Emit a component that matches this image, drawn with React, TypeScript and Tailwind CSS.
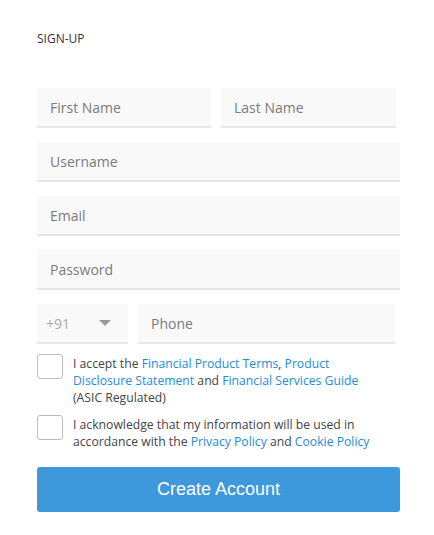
import React from "react";

const FIELD =
  "h-[40px] bg-[#f9f9f9] border-b-2 border-[#e6e6e6] px-[13px] flex items-center text-[14px] text-[#7b7b7b]";

function Field({ label, className = "" }: { label: string; className?: string }) {
  return (
    <div className={`${FIELD} ${className}`}>
      <span>{label}</span>
    </div>
  );
}

function Check({ children }: { children: React.ReactNode }) {
  return (
    <div className="flex items-start gap-[10px]">
      <div className="w-[26px] h-[25px] shrink-0 rounded-[3px] border border-[#bdbdbd] bg-white" />
      <p className="w-[300px] text-[12.2px] leading-[17px] text-[#444] pt-[1px]">{children}</p>
    </div>
  );
}

const A = "text-[#1f8bd6]";

export default function App() {
  return (
    <div
      className="w-[434px] h-[535px] bg-white pl-[37px] pt-[31px]"
      style={{ fontFamily: '"Open Sans", "Noto Sans", sans-serif' }}
    >
      <h1 className="text-[12px] leading-[16px] text-[#333] uppercase">Sign-up</h1>

      <div className="mt-[41px] w-[363px] flex flex-col gap-[14px]">
        <div className="flex gap-[10px]">
          <Field label="First Name" className="w-[174px]" />
          <Field label="Last Name" className="w-[175px]" />
        </div>
        <Field label="Username" />
        <Field label="Email" />
        <Field label="Password" />
        <div className="flex gap-[10px]">
          <div className={`${FIELD} w-[91px] justify-between !px-[9px] text-[#a9a9a9]`}>
            <span>+91</span>
            <svg width="12" height="6" viewBox="0 0 12 6" className="mr-[8px]">
              <path d="M0 0h12L6 6z" fill="#9a9a9a" />
            </svg>
          </div>
          <Field label="Phone" className="w-[257px]" />
        </div>
      </div>

      <div className="mt-[10px] w-[363px] flex flex-col gap-[9px]">
        <Check>
          I accept the <span className={A}>Financial Product Terms</span>,{" "}
          <span className={A}>Product Disclosure Statement</span> and{" "}
          <span className={A}>Financial Services Guide</span> (ASIC Regulated)
        </Check>
        <Check>
          I acknowledge that my information will be used in accordance with the{" "}
          <span className={A}>Privacy Policy</span> and <span className={A}>Cookie Policy</span>
        </Check>
      </div>

      <button
        className="mt-[17px] w-[363px] h-[45px] rounded-[3px] bg-[#3d99db] text-white text-[18px]"
        style={{ fontFamily: '"Liberation Sans", Arial, sans-serif' }}
      >
        Create Account
      </button>
    </div>
  );
}
